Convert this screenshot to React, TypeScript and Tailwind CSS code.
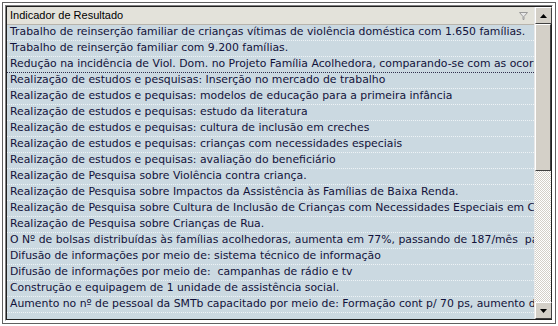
import React from 'react'

const rows = [
  'Trabalho de reinserção familiar de crianças vítimas de violência doméstica com 1.650 famílias.',
  'Trabalho de reinserção familiar com 9.200 famílias.',
  'Redução na incidência de Viol. Dom. no Projeto Família Acolhedora, comparando-se com as ocorrências',
  'Realização de estudos e pesquisas: Inserção no mercado de trabalho',
  'Realização de estudos e pequisas: modelos de educação para a primeira infância',
  'Realização de estudos e pequisas: estudo da literatura',
  'Realização de estudos e pequisas: cultura de inclusão em creches',
  'Realização de estudos e pequisas: crianças com necessidades especiais',
  'Realização de estudos e pequisas: avaliação do beneficiário',
  'Realização de Pesquisa sobre Violência contra criança.',
  'Realização de Pesquisa sobre Impactos da Assistência às Famílias de Baixa Renda.',
  'Realização de Pesquisa sobre Cultura de Inclusão de Crianças com Necessidades Especiais em Creches',
  'Realização de Pesquisa sobre Crianças de Rua.',
  'O Nº de bolsas distribuídas às famílias acolhedoras, aumenta em 77%, passando de 187/mês  para 331/mês',
  'Difusão de informações por meio de: sistema técnico de informação',
  'Difusão de informações por meio de:  campanhas de rádio e tv',
  'Construção e equipagem de 1 unidade de assistência social.',
  'Aumento no nº de pessoal da SMTb capacitado por meio de: Formação cont p/ 70 ps, aumento de 30%',
]

const dither = {
  backgroundImage: 'repeating-conic-gradient(#ffffff 0% 25%, #d4d0c8 0% 50%)',
  backgroundSize: '2px 2px',
}

function ScrollButton({ up }: { up: boolean }) {
  return (
    <div className="h-[17px] w-[17px] shrink-0 bg-[#d4d0c8] border border-t-white border-l-white border-r-[#404040] border-b-[#404040] flex items-center justify-center">
      <svg width="7" height="4" viewBox="0 0 7 4">
        {up ? <path d="M3.5 0L7 4H0z" fill="#000" /> : <path d="M0 0h7L3.5 4z" fill="#000" />}
      </svg>
    </div>
  )
}

export default function App() {
  return (
    <div className="w-[558px] h-[326px] bg-white p-[2px]">
      <div className="h-full border border-[#606060] p-[2px] bg-white">
        <div className="h-full border border-t-[#808080] border-l-[#808080] border-r-white border-b-white">
          <div className="h-full border border-[#202020] bg-[#cbd9e1] flex">
            <div className="flex-1 flex flex-col overflow-hidden">
              <div className="h-[18px] shrink-0 flex items-center justify-between pl-[3px] pr-[6px] border-b border-[#b8b4ac] bg-[#e3e2da] font-['Liberation_Sans',Arial,sans-serif] text-[11px] text-black">
                <span>Indicador de Resultado</span>
                <svg width="9" height="8" viewBox="0 0 9 8">
                  <path d="M0.5 0.5h8L5 4.5v3H4v-3z" fill="#e8e8e8" stroke="#9a9a9a" strokeWidth="1" />
                </svg>
              </div>
              {rows.map((r, i) => (
                <div
                  key={i}
                  className={`h-[16px] shrink-0 flex items-center pl-[3px] whitespace-pre overflow-hidden border-b border-dotted ${
                    i === 2 ? 'border-[#303050]' : 'border-[#eef3f6]'
                  } font-['DejaVu_Sans',Verdana,sans-serif] text-[10.85px] text-[#12123a]`}
                >
                  {r}
                </div>
              ))}
            </div>
            <div className="w-[17px] shrink-0 flex flex-col border-l border-[#e8e8e8]">
              <ScrollButton up />
              <div className="h-[147px] shrink-0 bg-[#d4d0c8] border border-t-white border-l-white border-r-[#404040] border-b-[#404040]" />
              <div className="flex-1" style={dither} />
              <ScrollButton up={false} />
            </div>
          </div>
        </div>
      </div>
    </div>
  )
}
